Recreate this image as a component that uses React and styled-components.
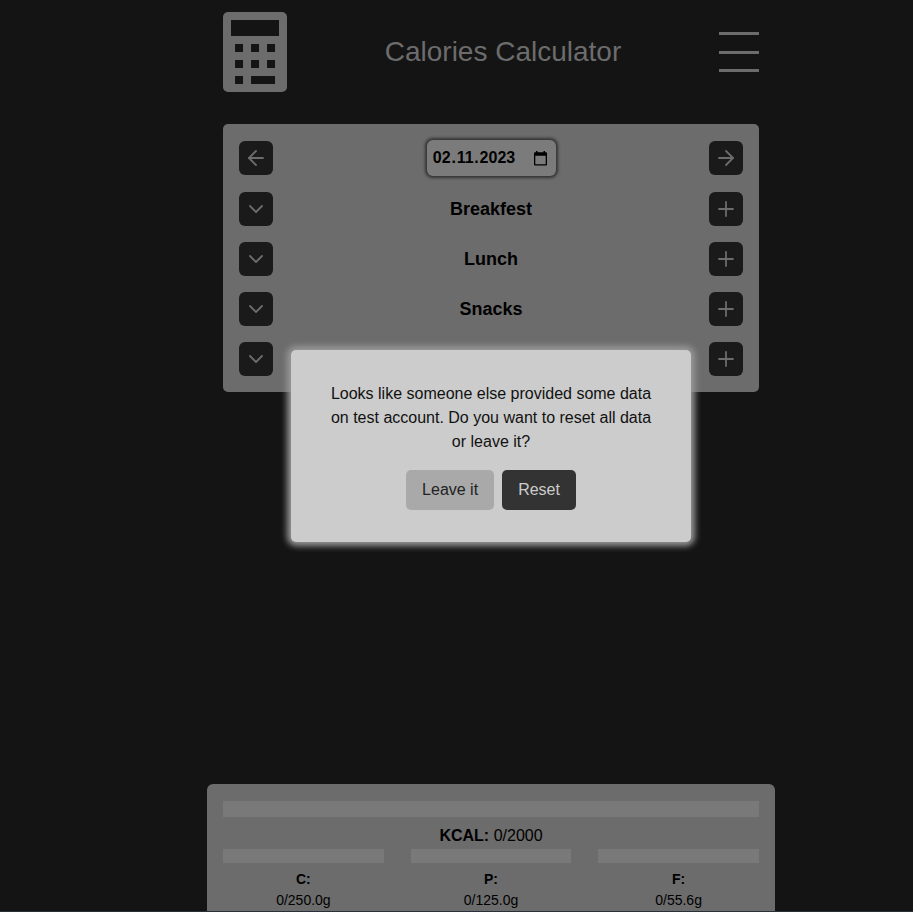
import React from "react";
import styled, { createGlobalStyle } from "styled-components";
import { FiArrowLeft, FiArrowRight, FiChevronDown, FiPlus } from "react-icons/fi";

const GlobalStyle = createGlobalStyle`
  *, *::before, *::after { box-sizing: border-box; }
  body {
    margin: 0;
    background: #141414;
    font-family: "Liberation Sans", Arial, sans-serif;
    font-size: 16px;
    line-height: 24px;
    color: #000;
    overflow: hidden;
  }
  h1, h2, p { margin: 0; }
  button { font: inherit; border: 0; padding: 0; margin: 0; cursor: pointer; }
`;

const Viewport = styled.div`
  position: relative;
  width: 100%;
  height: 912px;
  overflow: hidden;
  border-bottom: 1px solid #29303a;
`;

const Page = styled.div`
  width: 982px;
  height: 912px;
  display: flex;
  flex-direction: column;
  align-items: center;
`;

const Header = styled.header`
  width: 536px;
  height: 92px;
  padding-top: 12px;
  display: flex;
  align-items: center;
  justify-content: space-between;
`;

const Title = styled.h1`
  font-size: 28px;
  font-weight: 400;
  line-height: 40px;
  color: #6c6c6c;
`;

const MenuButton = styled.button`
  width: 40px;
  height: 40px;
  display: flex;
  flex-direction: column;
  background: none;
`;

const MenuLine = styled.span`
  height: 3px;
  margin-bottom: ${({ $gap }) => $gap}px;
  background: #6c6c6c;
`;

const Diary = styled.main`
  width: 536px;
  margin-top: 32px;
  padding: 16px;
  display: flex;
  flex-direction: column;
  gap: 16px;
  border-radius: 5px;
  background: #6c6c6c;
`;

const Row = styled.div`
  display: flex;
  align-items: center;
  justify-content: space-between;
`;

const MealName = styled.h2`
  font-size: 18px;
  line-height: 24px;
  font-weight: 700;
`;

const IconButton = styled.button`
  width: 34px;
  height: 34px;
  display: flex;
  align-items: center;
  justify-content: center;
  border-radius: 6px;
  background: #1a1a1a;
  color: #6c6c6c;

  svg { stroke-width: 1.8; }
`;

const DateField = styled.div`
  width: 129px;
  height: 36px;
  margin-left: 1px;
  padding: 0 9px 0 5px;
  display: flex;
  align-items: center;
  justify-content: space-between;
  border-radius: 6px;
  background: #7b7b7b;
  box-shadow: 0 0 3px 2px #333333;
  font-weight: 700;
`;

const DateParts = styled.span`
  display: flex;
`;

const DatePart = styled.span`
  padding: 0 ${({ $separator }) => ($separator ? 0 : 0.8)}px;
`;

const Summary = styled.footer`
  width: 568px;
  height: 128px;
  margin-top: auto;
  padding: 17px 16px 0;
  border-radius: 6px 6px 0 0;
  background: #6c6c6c;
`;

const Track = styled.div`
  height: ${({ $height }) => $height}px;
  background: #797979;
`;

const Calories = styled.p`
  margin: 7px 0 1px;
  text-align: center;
`;

const Nutrients = styled.div`
  display: flex;
  justify-content: space-between;
`;

const Nutrient = styled.div`
  width: 30%;
  font-size: 14px;
  line-height: 21px;
  text-align: center;
`;

const NutrientName = styled.p`
  margin-top: 6px;
  font-weight: 700;
`;

const Overlay = styled.div`
  position: absolute;
  inset: 0 auto auto 0;
  width: 982px;
  height: 892px;
  display: flex;
  align-items: center;
  justify-content: center;
`;

const Dialog = styled.section`
  width: 400px;
  padding: 32px;
  border-radius: 5px;
  background: #cccccc;
  box-shadow: 0 0 6px 4px #989898;
  text-align: center;
  color: #111;
`;

const Actions = styled.div`
  margin-top: 16px;
  display: flex;
  justify-content: center;
  gap: 8px;
`;

const ActionButton = styled.button`
  height: 40px;
  padding: 0 16px;
  border-radius: 5px;
  background: ${({ $primary }) => ($primary ? "#333333" : "#a9a9a9")};
  color: ${({ $primary }) => ($primary ? "#cccccc" : "#222222")};
`;

function Logo() {
  return (
    <svg width="64" height="80" viewBox="0 0 64 80">
      <rect width="64" height="80" rx="5" fill="#6c6c6c" />
      <path
        fill="#141414"
        d="M8 8h48v16H8zM12 32h8v8h-8zM28 32h8v8h-8zM44 32h8v8h-8zM12 48h8v8h-8zM28 48h8v8h-8zM44 48h8v8h-8zM12 64h8v8h-8zM28 64h24v8H28z"
      />
    </svg>
  );
}

function CalendarIcon() {
  return (
    <svg width="13" height="15" viewBox="0 0 13 15">
      <path
        fill="#000"
        fillRule="evenodd"
        d="M2 0h1.5v1.3h6V0H11v1.3h1q1 0 1 1V13.5q0 1-1 1H1q-1 0-1-1V2.3q0-1 1-1h1zM1.3 4.7v8.5h10.4V4.7z"
      />
    </svg>
  );
}

const meals = ["Breakfest", "Lunch", "Snacks", "Dinner"];

const nutrients = [
  { name: "C:", value: "0/250.0g" },
  { name: "P:", value: "0/125.0g" },
  { name: "F:", value: "0/55.6g" },
];

export default function App() {
  return (
    <Viewport>
      <GlobalStyle />
      <Page>
        <Header>
          <Logo />
          <Title>Calories Calculator</Title>
          <MenuButton aria-label="Menu">
            <MenuLine $gap={16} />
            <MenuLine $gap={15} />
            <MenuLine $gap={0} />
          </MenuButton>
        </Header>
        <Diary>
          <Row>
            <IconButton aria-label="Previous day">
              <FiArrowLeft size={24} />
            </IconButton>
            <DateField>
              <DateParts>
                <DatePart>02</DatePart>
                <DatePart $separator>.</DatePart>
                <DatePart>11</DatePart>
                <DatePart $separator>.</DatePart>
                <DatePart>2023</DatePart>
              </DateParts>
              <CalendarIcon />
            </DateField>
            <IconButton aria-label="Next day">
              <FiArrowRight size={24} />
            </IconButton>
          </Row>
          {meals.map((meal) => (
            <Row key={meal}>
              <IconButton aria-label={`Expand ${meal}`}>
                <FiChevronDown size={24} />
              </IconButton>
              <MealName>{meal}</MealName>
              <IconButton aria-label={`Add to ${meal}`}>
                <FiPlus size={24} />
              </IconButton>
            </Row>
          ))}
        </Diary>
        <Summary>
          <Track $height={16} />
          <Calories>
            <strong>KCAL:</strong> 0/2000
          </Calories>
          <Nutrients>
            {nutrients.map(({ name, value }) => (
              <Nutrient key={name}>
                <Track $height={14} />
                <NutrientName>{name}</NutrientName>
                <p>{value}</p>
              </Nutrient>
            ))}
          </Nutrients>
        </Summary>
      </Page>
      <Overlay>
        <Dialog role="dialog">
          <p>
            Looks like someone else provided some data on test account. Do you
            want to reset all data or leave it?
          </p>
          <Actions>
            <ActionButton>Leave it</ActionButton>
            <ActionButton $primary>Reset</ActionButton>
          </Actions>
        </Dialog>
      </Overlay>
    </Viewport>
  );
}
